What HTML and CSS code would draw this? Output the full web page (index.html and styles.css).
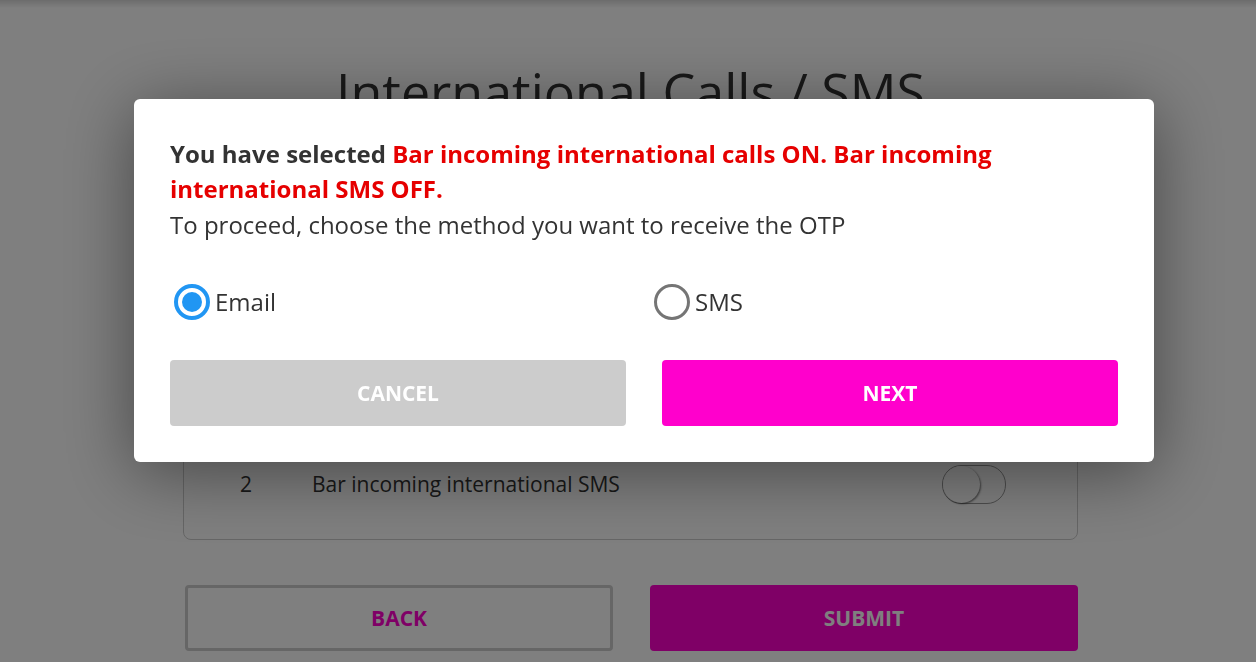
FILE: index.html
```html
<!doctype html>
<html lang="en">
<head>
  <meta charset="utf-8">
  <title>International Calls / SMS</title>
  <link rel="stylesheet" href="styles.css">
</head>
<body>
<div class="page">
  <h1 class="page__title">International Calls / SMS</h1>

  <div class="barCard">
    <div class="barRow">
      <span class="barRow__num">1</span>
      <span class="barRow__label">Bar incoming international calls</span>
      <span class="toggle toggle--on"></span>
    </div>
    <div class="barRow">
      <span class="barRow__num">2</span>
      <span class="barRow__label">Bar incoming international SMS</span>
      <span class="toggle"></span>
    </div>
  </div>

  <div class="actions">
    <button type="button" class="button button--outline">BACK</button>
    <button type="button" class="button button--primary">SUBMIT</button>
  </div>
</div>

<div class="overlay"></div>

<div class="modal">
  <p class="modal__summary">
    You have selected <span class="modal__choice">Bar incoming international calls ON. Bar incoming international SMS OFF.</span>
  </p>
  <p class="modal__hint">To proceed, choose the method you want to receive the OTP</p>

  <div class="otpOptions">
    <label class="radio">
      <span class="radio__mark radio__mark--checked"></span>
      Email
    </label>
    <label class="radio">
      <span class="radio__mark"></span>
      SMS
    </label>
  </div>

  <div class="modal__buttons">
    <button type="button" class="button button--grey">CANCEL</button>
    <button type="button" class="button button--primary">NEXT</button>
  </div>
</div>
</body>
</html>
```

FILE: styles.css
```css
body {
  margin: 0;
  overflow: hidden;
  height: 662px;
  background-color: #ffffff;
  font-family: "Open Sans", "Noto Sans", Arial, sans-serif;
  color: #333333;
}

.page {
  padding: 0 178px 0 183px;
}

.page__title {
  margin: 0;
  padding-top: 56px;
  font-size: 52px;
  font-weight: 400;
  line-height: 70px;
  text-align: center;
  color: #333333;
}

.barCard {
  margin-top: 46px;
  border: 1px solid #cccccc;
  border-radius: 8px;
  padding: 206px 0 20px;
}

.barRow {
  display: flex;
  align-items: center;
  height: 70px;
  padding: 0 71px 0 56px;
  font-size: 21px;
}

.barRow__num {
  width: 72px;
}

.barRow__label {
  flex: 1;
}

.toggle {
  width: 62px;
  height: 37px;
  border: 1px solid #999999;
  border-radius: 19px;
  position: relative;
  background: #ffffff;
}

.toggle:before {
  content: "";
  position: absolute;
  left: 0;
  top: 0;
  width: 37px;
  height: 37px;
  border-radius: 50%;
  background: #ffffff;
  box-shadow: 1px 1px 2px rgba(0, 0, 0, 0.5);
}

.toggle--on:before {
  left: 25px;
}

.actions {
  display: grid;
  grid-template-columns: 1fr 1fr;
  column-gap: 37px;
  margin-top: 45px;
  padding-left: 2px;
}

.button {
  height: 66px;
  border: none;
  border-radius: 4px;
  font-family: inherit;
  font-size: 21px;
  font-weight: 700;
  color: #ffffff;
  cursor: pointer;
}

.button--outline {
  background: #ffffff;
  border: 3px solid #cccccc;
  color: #ff00cc;
}

.button--primary {
  background-color: #ff00cc;
}

.button--grey {
  background-color: #cccccc;
}

.overlay {
  position: fixed;
  top: 0;
  left: 0;
  right: 0;
  bottom: 0;
  background:
    linear-gradient(rgba(0, 0, 0, 0.15), rgba(0, 0, 0, 0) 8px),
    rgba(0, 0, 0, 0.5);
}

.modal {
  position: fixed;
  top: 99px;
  left: 134px;
  width: 948px;
  padding: 37px 36px 36px;
  background: #ffffff;
  border-radius: 6px;
  box-shadow: 0 10px 70px rgba(0, 0, 0, 0.45);
}

.modal__summary {
  margin: 0;
  font-size: 24px;
  font-weight: 700;
  line-height: 35px;
  color: #333333;
}

.modal__choice {
  color: #e60000;
}

.modal__hint {
  margin: 0;
  font-size: 24px;
  line-height: 38px;
  color: #333333;
}

.otpOptions {
  display: grid;
  grid-template-columns: 480px 1fr;
  margin-top: 40px;
  padding-left: 4px;
}

.radio {
  display: flex;
  align-items: center;
  gap: 5px;
  font-size: 24px;
  line-height: 36px;
  color: #333333;
}

.radio__mark {
  width: 30px;
  height: 30px;
  border: 3px solid #757575;
  border-radius: 50%;
  display: flex;
  align-items: center;
  justify-content: center;
}

.radio__mark--checked {
  border: 4px solid #2196f3;
  width: 28px;
  height: 28px;
}

.radio__mark--checked:after {
  content: "";
  width: 20px;
  height: 20px;
  border-radius: 50%;
  background: #2196f3;
}

.modal__buttons {
  display: grid;
  grid-template-columns: 1fr 1fr;
  column-gap: 36px;
  margin-top: 40px;
}
```
